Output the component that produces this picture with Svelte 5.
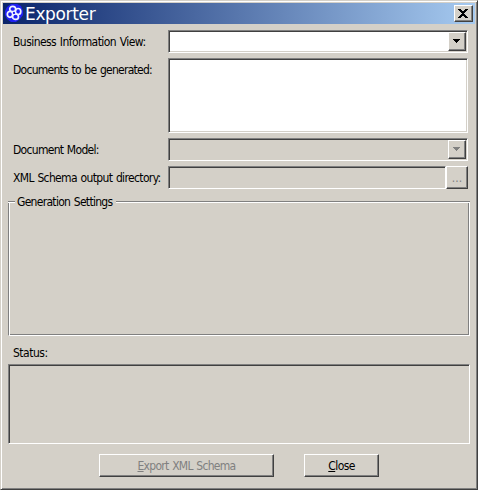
<script>
  let view = $state('');
</script>

<main class="window">
  <header>
    <svg class="logo" width="18" height="18" viewBox="0 0 18 18">
      <path d="M6 0h6l4 2 2 5v4l-3 4-4 3H6l-4-3-2-4V7l2-4z" fill="#2020f4" />
      <g fill="none" stroke="#eef2ff" stroke-width="1.7">
        <ellipse cx="7.7" cy="5" rx="3" ry="2.7" />
        <ellipse cx="13.1" cy="7.5" rx="2.7" ry="3" />
        <ellipse cx="10.5" cy="12.7" rx="3" ry="2.7" />
        <ellipse cx="5" cy="10.3" rx="2.7" ry="3" />
      </g>
      <circle cx="9" cy="8.9" r="1.1" fill="#2020f4" />
    </svg>
    <h1>Exporter</h1>
    <button class="raised x" aria-label="Close window">
      <svg width="10" height="9" viewBox="0 0 10 9" shape-rendering="crispEdges">
        <path d="M0 0h3v1h1v1h2V1h1V0h3v1H9v1H8v1H7v1H6v1h1v1h1v1h1v1h1v1H7V8H6V7H4v1H3v1H0V8h1V7h1V6h1V5h1V4H3V3H2V2H1V1H0z" />
      </svg>
    </button>
  </header>

  <div class="rows">
    <div class="row"><span class="label"><span class="t l1">Business Information View:</span></span>
      <div class="sunken combo white">{view}<button class="raised arrow" aria-label="Open"><svg width="7" height="4" viewBox="0 0 7 4" shape-rendering="crispEdges"><path d="M0 0h7v1H6v1H5v1H4v1H3V3H2V2H1V1H0z" /></svg></button></div>
    </div>
    <div class="row tall"><span class="label"><span class="t l2">Documents to be generated:</span></span>
      <div class="sunken combo white"></div>
    </div>
    <div class="row"><span class="label"><span class="t l3">Document Model:</span></span>
      <div class="sunken combo"><button class="raised arrow off" disabled aria-label="Open model"><svg width="7" height="4" viewBox="0 0 7 4" shape-rendering="crispEdges"><path d="M0 0h7v1H6v1H5v1H4v1H3V3H2V2H1V1H0z" fill="#808080" /></svg></button></div>
    </div>
    <div class="row"><span class="label"><span class="t l4">XML Schema output directory:</span></span>
      <div class="sunken combo"></div><button class="raised browse" disabled>...</button>
    </div>
  </div>

  <section class="group">
    <div class="legend"><i class="lead"></i><span class="t l5">Generation Settings</span><i class="rest"></i></div>
    <div class="body"></div>
  </section>

  <div class="status"><span class="t l6">Status:</span></div>
  <div class="sunken log"></div>

  <footer>
    <button class="raised export" disabled><span class="t l7"><u>E</u>xport XML Schema</span></button>
    <button class="raised close"><span class="t l8"><u>C</u>lose</span></button>
  </footer>
</main>

<style>
  :global(body) { margin: 0; background: #d4d0c8; }
  * { box-sizing: border-box; }
  .window {
    width: 478px; height: 490px; padding: 2px 1px 0 2px; background: #d4d0c8;
    border: 1px solid; border-color: #d4d0c8 #404040 #404040 #d4d0c8;
    box-shadow: inset 1px 1px #fff, inset -1px -1px #808080;
    font: 12px/14px "DejaVu Sans Condensed", "DejaVu Sans", sans-serif; font-stretch: condensed; color: #000;
  }
  header {
    display: flex; align-items: center; width: 472px; height: 21px; padding: 0 2px;
    background: linear-gradient(to right, #0a246a, #a6caf0);
  }
  .logo { margin-top: -1px; }
  h1 { margin: 0 auto 0 2px; font: 17px/20px "DejaVu Sans", sans-serif; color: #fff; letter-spacing: -0.35px; padding-top: 1px; }
  button { padding: 0; margin: 0; font: inherit; color: inherit; border-radius: 0; }
  .raised {
    display: flex; align-items: center; justify-content: center; flex: none; background: #d4d0c8;
    border: 1px solid; border-color: #fff #404040 #404040 #fff; box-shadow: inset -1px -1px #808080;
  }
  .sunken {
    border: 1px solid; border-color: #808080 #fff #fff #808080;
    box-shadow: inset 1px 1px #404040, inset -1px -1px #d4d0c8;
  }
  .x { width: 19px; height: 17px; padding: 0 1px 1px 0; }
  .rows { display: flex; flex-direction: column; gap: 5px; padding: 6px 0 0 10px; }
  .row { display: flex; height: 23px; }
  .tall { height: 75px; }
  .label { width: 155px; flex: none; padding-top: 5px; }
  .row { width: 455px; }
  .t { display: inline-block; white-space: nowrap; letter-spacing: -0.6px; word-spacing: 0.8px; }
  .l1 { letter-spacing: -0.56px; }
  .l4 { letter-spacing: -0.64px; }
  .l2 { letter-spacing: -0.73px; }
  .l3, .l5 { letter-spacing: -0.7px; }
  .l6 { letter-spacing: -0.5px; }
  .l7 { letter-spacing: -0.7px; }
  .combo { flex: 1; display: flex; justify-content: flex-end; padding: 1px; }
  .white { background: #fff; }
  .arrow { width: 18px; height: 19px; padding: 0 1px 1px 0; }
  .browse { width: 22px; height: 23px; color: #808080; }
  .group { width: 462px; height: 141px; margin: 6px 0 0 5px; display: flex; flex-direction: column; }
  .legend { display: flex; height: 8px; align-items: flex-end; }
  .legend .t { align-self: flex-start; margin: 0 4px 0 2px; height: 8px; }
  .legend i { height: 2px; border-top: 1px solid #808080; border-bottom: 1px solid #fff; }
  .lead { width: 7px; }
  .rest { flex: 1; }
  .body { flex: 1; border: 1px solid; border-color: transparent #fff #fff #808080; border-top: 0; box-shadow: inset 1px 0 #fff, inset -1px -1px #808080; }
  .status { height: 28px; padding: 10px 0 0 10px; }
  .log { width: 462px; height: 80px; margin-left: 5px; }
  footer { display: flex; gap: 30px; padding: 10px 0 0 96px; }
  footer button { height: 23px; }
  .export { width: 175px; color: #808080; }
  .close { width: 75px; }
</style>
